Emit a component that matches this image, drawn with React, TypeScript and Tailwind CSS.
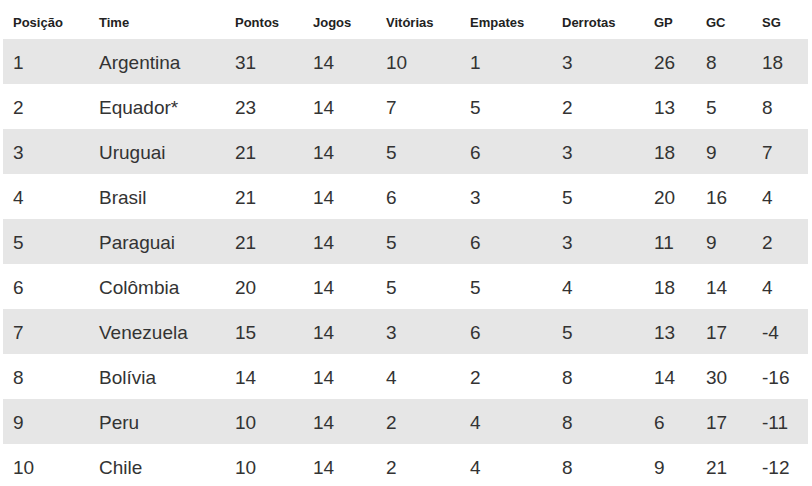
import React from "react";

const rows: (string | number)[][] = [
  [1, "Argentina", 31, 14, 10, 1, 3, 26, 8, 18],
  [2, "Equador*", 23, 14, 7, 5, 2, 13, 5, 8],
  [3, "Uruguai", 21, 14, 5, 6, 3, 18, 9, 7],
  [4, "Brasil", 21, 14, 6, 3, 5, 20, 16, 4],
  [5, "Paraguai", 21, 14, 5, 6, 3, 11, 9, 2],
  [6, "Colômbia", 20, 14, 5, 5, 4, 18, 14, 4],
  [7, "Venezuela", 15, 14, 3, 6, 5, 13, 17, -4],
  [8, "Bolívia", 14, 14, 4, 2, 8, 14, 30, -16],
  [9, "Peru", 10, 14, 2, 4, 8, 6, 17, -11],
  [10, "Chile", 10, 14, 2, 4, 8, 9, 21, -12],
];

const headers = ["Posição", "Time", "Pontos", "Jogos", "Vitórias", "Empates", "Derrotas", "GP", "GC", "SG"];
const widths = ["w-[86px]", "w-[136px]", "w-[78px]", "w-[73px]", "w-[84px]", "w-[92px]", "w-[92px]", "w-[52px]", "w-[56px]", "w-[56px]"];

export default function App() {
  return (
    <div className="bg-white w-[812px] h-[486px] overflow-hidden pl-[3px] font-['Liberation_Sans',Arial,sans-serif]">
      <table className="table-fixed border-collapse w-[805px]">
        <colgroup>
          {widths.map((w, i) => (
            <col key={i} className={w} />
          ))}
        </colgroup>
        <thead>
          <tr className="h-[39px]">
            {headers.map((h) => (
              <th key={h} className="text-left font-bold text-[13px] text-[#222] p-0 pl-[10px] pt-[7px] align-middle">
                {h}
              </th>
            ))}
          </tr>
        </thead>
        <tbody>
          {rows.map((r, i) => (
            <tr key={i} className={i % 2 === 0 ? "h-[45px] bg-[#e6e6e6]" : "h-[45px] bg-white"}>
              {r.map((c, j) => (
                <td key={j} className="text-left text-[19px] text-[#333] p-0 pl-[10px] pt-[3px] align-middle">
                  {c}
                </td>
              ))}
            </tr>
          ))}
        </tbody>
      </table>
    </div>
  );
}
